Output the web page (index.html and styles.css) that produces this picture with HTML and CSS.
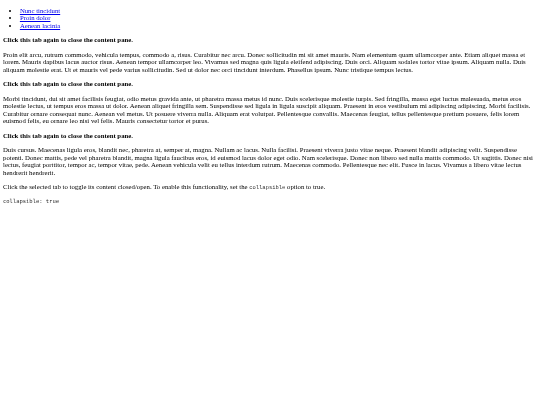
FILE: index.html
```html
<!DOCTYPE html>
<html lang="en">
<head>
<meta charset="utf-8">
<title>Tabs - Collapse content</title>
<link rel="stylesheet" href="styles.css">
</head>
<body class="page-body">
<div id="tabs" class="tabs">
  <ul class="tab-list">
    <li><a class="tab-link" href="#tabs-1">Nunc tincidunt</a></li>
    <li><a class="tab-link" href="#tabs-2">Proin dolor</a></li>
    <li><a class="tab-link" href="#tabs-3">Aenean lacinia</a></li>
  </ul>
  <div id="tabs-1" class="tab-panel">
    <p><strong>Click this tab again to close the content pane.</strong></p>
    <p>Proin elit arcu, rutrum commodo, vehicula tempus, commodo a, risus. Curabitur nec arcu. Donec sollicitudin mi sit amet mauris. Nam elementum quam ullamcorper ante. Etiam aliquet massa et lorem. Mauris dapibus lacus auctor risus. Aenean tempor ullamcorper leo. Vivamus sed magna quis ligula eleifend adipiscing. Duis orci. Aliquam sodales tortor vitae ipsum. Aliquam nulla. Duis aliquam molestie erat. Ut et mauris vel pede varius sollicitudin. Sed ut dolor nec orci tincidunt interdum. Phasellus ipsum. Nunc tristique tempus lectus.</p>
  </div>
  <div id="tabs-2" class="tab-panel">
    <p><strong>Click this tab again to close the content pane.</strong></p>
    <p>Morbi tincidunt, dui sit amet facilisis feugiat, odio metus gravida ante, ut pharetra massa metus id nunc. Duis scelerisque molestie turpis. Sed fringilla, massa eget luctus malesuada, metus eros molestie lectus, ut tempus eros massa ut dolor. Aenean aliquet fringilla sem. Suspendisse sed ligula in ligula suscipit aliquam. Praesent in eros vestibulum mi adipiscing adipiscing. Morbi facilisis. Curabitur ornare consequat nunc. Aenean vel metus. Ut posuere viverra nulla. Aliquam erat volutpat. Pellentesque convallis. Maecenas feugiat, tellus pellentesque pretium posuere, felis lorem euismod felis, eu ornare leo nisi vel felis. Mauris consectetur tortor et purus.</p>
  </div>
  <div id="tabs-3" class="tab-panel">
    <p><strong>Click this tab again to close the content pane.</strong></p>
    <p>Duis cursus. Maecenas ligula eros, blandit nec, pharetra at, semper at, magna. Nullam ac lacus. Nulla facilisi. Praesent viverra justo vitae neque. Praesent blandit adipiscing velit. Suspendisse potenti. Donec mattis, pede vel pharetra blandit, magna ligula faucibus eros, id euismod lacus dolor eget odio. Nam scelerisque. Donec non libero sed nulla mattis commodo. Ut sagittis. Donec nisi lectus, feugiat porttitor, tempor ac, tempor vitae, pede. Aenean vehicula velit eu tellus interdum rutrum. Maecenas commodo. Pellentesque nec elit. Fusce in lacus. Vivamus a libero vitae lectus hendrerit hendrerit.</p>
  </div>
</div>
<div class="demo-description">
  <p>Click the selected tab to toggle its content closed/open. To enable this functionality, set the <code class="code">collapsible</code> option to true.</p>
  <pre class="code-block"><code>collapsible: true
</code></pre>
</div>
</body>
</html>
```

FILE: styles.css
```css
/* Plain demo page in a compact scale: 6.75px body text on 7.6px lines */
html {
  margin: 0;
  padding: 0;
}

/* top margin left to the list, as if the body's margin had collapsed into it */
.page-body {
  margin: 0 3.375px 3.375px;
  font-family: "Liberation Serif", "Times New Roman", serif;
  font-size: 6.75px;
  line-height: 7.594px;
  color: #000;
  /* own layer: keeps the tiny text on greyscale antialiasing */
  will-change: transform;
}

.tab-list {
  margin: 6.75px 0;
  padding-left: 16.875px;
  list-style: disc;
}

.tab-link {
  color: #0000ee;
  text-decoration: underline;
}

.tab-panel p,
.demo-description p {
  margin: 6.75px 0;
}

.code,
.code-block {
  font-family: "Liberation Mono", "Courier New", monospace;
  font-size: 5.484px;
  color: #333;
}

.code-block {
  margin: 5.484px 0;
  line-height: 6.33px;
}
```
